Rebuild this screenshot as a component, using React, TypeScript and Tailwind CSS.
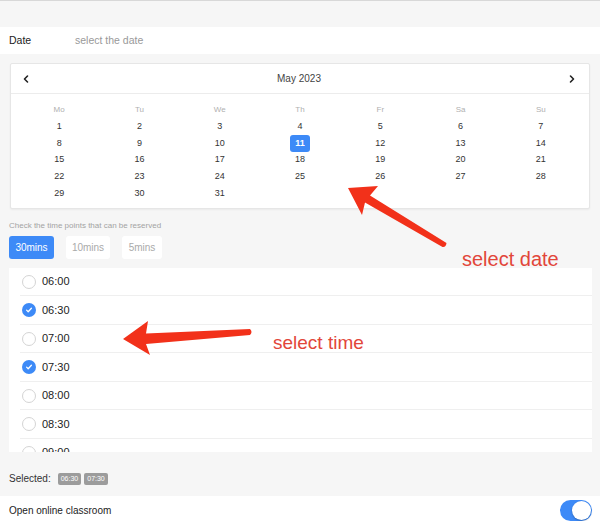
import React from "react";
import { ChevronLeft, ChevronRight } from "lucide-react";

const weekDays = ["Mo", "Tu", "We", "Th", "Fr", "Sa", "Su"];

// May 2023 starts on a Monday
const weeks: (number | null)[][] = [
  [1, 2, 3, 4, 5, 6, 7],
  [8, 9, 10, 11, 12, 13, 14],
  [15, 16, 17, 18, 19, 20, 21],
  [22, 23, 24, 25, 26, 27, 28],
  [29, 30, 31, null, null, null, null],
];

const slots = [
  { time: "06:00", checked: false },
  { time: "06:30", checked: true },
  { time: "07:00", checked: false },
  { time: "07:30", checked: true },
  { time: "08:00", checked: false },
  { time: "08:30", checked: false },
  { time: "09:00", checked: false },
];

const Radio = ({ checked }: { checked: boolean }) =>
  checked ? (
    <span className="flex h-[14px] w-[14px] items-center justify-center rounded-full bg-[#3d8af7]">
      <svg width="8" height="8" viewBox="0 0 10 10" fill="none">
        <path d="M2 5.2l2 2 4-4.4" stroke="white" strokeWidth="1.6" strokeLinecap="round" strokeLinejoin="round" />
      </svg>
    </span>
  ) : (
    <span className="h-[14px] w-[14px] rounded-full border border-[#d4d4d4] bg-white" />
  );

const Calendar = () => (
  <div className="mx-[10px] mt-[9px] rounded-[2px] border border-[#e6e6e6] bg-white shadow-[0_1px_2px_rgba(0,0,0,0.05)]">
    <div className="flex h-[30px] items-center justify-between border-b border-[#ececec] pl-[9px] pr-[11px]">
      <ChevronLeft size={12} strokeWidth={3.2} className="text-[#222]" />
      <span className="text-[10px] text-[#444]">May 2023</span>
      <ChevronRight size={12} strokeWidth={3.2} className="text-[#222]" />
    </div>
    <div className="px-[8px] pt-[8px] pb-[6px]">
      <div className="grid h-[16px] grid-cols-7 items-center text-center text-[8px] text-[#b0b0b0]">
        {weekDays.map((d) => (
          <span key={d}>{d}</span>
        ))}
      </div>
      {weeks.map((week, i) => (
        <div key={i} className="grid h-[16.75px] grid-cols-7 items-center text-center text-[9px] text-[#333]">
          {week.map((day, j) =>
            day === 11 ? (
              <span key={j} className="flex justify-center">
                <span className="flex h-[17px] w-[20px] items-center justify-center rounded-[3px] bg-[#3d8af7] font-bold text-white">
                  {day}
                </span>
              </span>
            ) : (
              <span key={j}>{day ?? ""}</span>
            )
          )}
        </div>
      ))}
    </div>
  </div>
);

export default function App() {
  return (
    <div className="relative h-[521px] w-[600px] overflow-hidden bg-[#f6f6f6] font-['Liberation_Sans',Arial,sans-serif]">
      <div className="h-px bg-[#d8d8d8]" />
      <div className="h-[26px]" />

      <div className="flex h-[27px] items-center bg-white px-[9px] text-[10.5px]">
        <span className="w-[66px] text-[#222]">Date</span>
        <span className="text-[#999]">select the date</span>
      </div>

      <Calendar />

      <div className="px-[9px]">
        <p className="mt-[11px] h-[12px] text-[8px] leading-[12px] text-[#a3a3a3]">
          Check the time points that can be reserved
        </p>
        <div className="mt-[4px] flex gap-[12px] text-[10px]">
          <span className="flex h-[23px] w-[45px] items-center justify-center rounded-[3px] bg-[#3d8af7] text-white">
            30mins
          </span>
          <span className="flex h-[23px] w-[44px] items-center justify-center rounded-[3px] bg-white text-[#aaa]">
            10mins
          </span>
          <span className="flex h-[23px] w-[40px] items-center justify-center rounded-[3px] bg-white text-[#aaa]">
            5mins
          </span>
        </div>
      </div>

      <div className="mt-[9px] ml-[9px] mr-[8px] h-[184px] overflow-hidden bg-white">
        {slots.map((s) => (
          <div
            key={s.time}
            className="ml-[11px] flex h-[28.5px] items-center gap-[6px] border-b border-[#efefef] pl-[2px] text-[11px] text-[#222]"
          >
            <Radio checked={s.checked} />
            <span>{s.time}</span>
          </div>
        ))}
      </div>

      <div className="flex h-[44px] items-center gap-[3px] px-[9px] pt-[10px] text-[10px] text-[#333]">
        <span className="mr-[4px]">Selected:</span>
        <span className="rounded-[2px] bg-[#9c9c9c] px-[3px] text-[7px] leading-[12px] text-white">06:30</span>
        <span className="rounded-[2px] bg-[#9c9c9c] px-[3px] text-[7px] leading-[12px] text-white">07:30</span>
      </div>

      <div className="flex h-[26px] items-center justify-between bg-white pt-[3px] pl-[9px] pr-[8px] text-[10px] text-[#222]">
        <span>Open online classroom</span>
        <span className="flex h-[21px] w-[32px] items-center justify-end rounded-full bg-[#3d8af7] p-px">
          <span className="h-[19px] w-[19px] rounded-full bg-white shadow-[0_1px_2px_rgba(0,0,0,0.25)]" />
        </span>
      </div>

      {/* red callouts drawn on top */}
      <svg className="pointer-events-none absolute inset-0" width="600" height="521" viewBox="0 0 600 521">
        <path
          d="M348 188 L378 186 L370 195.5 L446.5 243 Q446 247.5 442.5 247 L365 202.5 L362 215 Z"
          fill="#f2311a"
          strokeLinejoin="round"
        />
        <path
          d="M123 339 L148 321 L146 333.5 L250 329 Q253 332 250 335 L146 344 L150 355 Z"
          fill="#f2311a"
          strokeLinejoin="round"
        />
      </svg>
      <span className="absolute left-[462px] top-[246px] text-[20px] leading-[26px] text-[#e2463a]">select date</span>
      <span className="absolute left-[273px] top-[331px] text-[19px] leading-[24px] text-[#e2463a]">select time</span>
    </div>
  );
}
